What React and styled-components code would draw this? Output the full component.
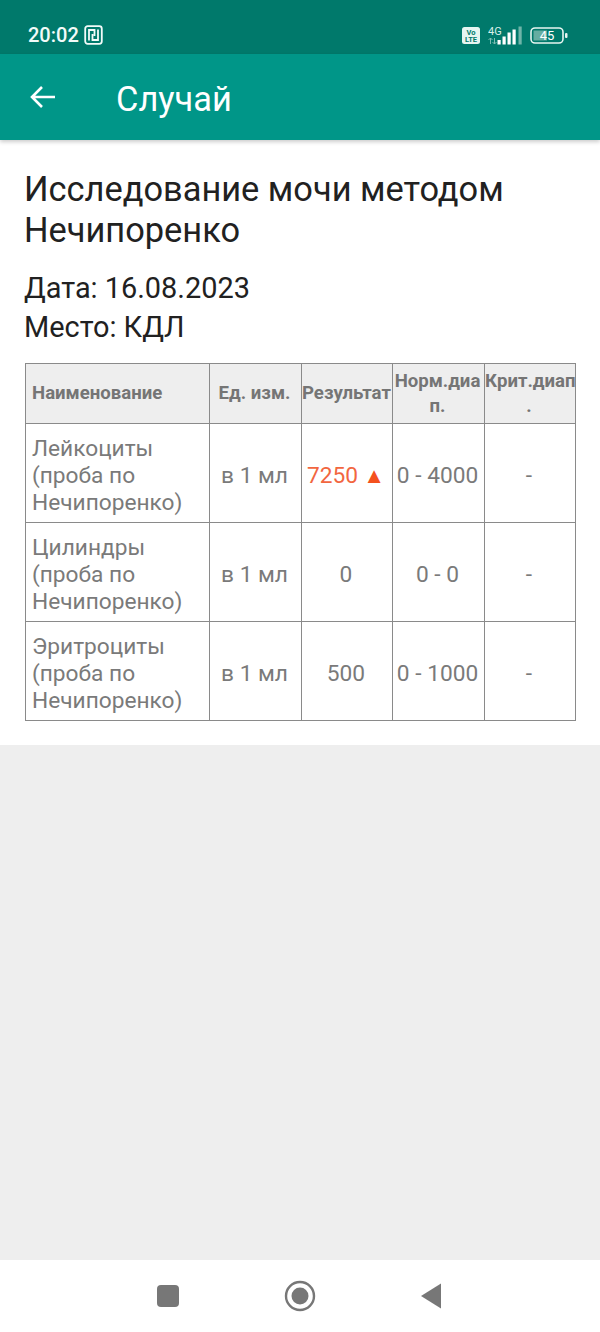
import styled, { createGlobalStyle } from "styled-components";

const GlobalStyle = createGlobalStyle`
  html, body {
    margin: 0;
    padding: 0;
    background: #eeeeee;
    font-family: Roboto, "Noto Sans", sans-serif;
  }
`;

const Screen = styled.div`
  width: 600px;
  height: 1332px;
  display: flex;
  flex-direction: column;
  overflow: hidden;
`;

const StatusBar = styled.div`
  height: 54px;
  flex: none;
  background: #00796b;
  color: #f2fbf9;
  display: flex;
  align-items: center;
  justify-content: space-between;
  padding: 16px 32px 0 28px;
  box-sizing: border-box;
`;

const StatusLeft = styled.div`
  display: flex;
  align-items: center;
  gap: 5px;
  font-size: 20px;
  font-weight: 500;
`;

const StatusRight = styled.div`
  display: flex;
  align-items: center;
  gap: 8px;
`;

const AppBar = styled.header`
  height: 86px;
  flex: none;
  background: #009688;
  color: #ffffff;
  display: flex;
  align-items: center;
  padding-left: 30px;
  box-shadow: 0 2px 4px rgba(0, 0, 0, 0.2);
  position: relative;
`;

const AppTitle = styled.h1`
  margin: 4px 0 0 61px;
  font-size: 34.4px;
  font-weight: 400;
  line-height: 1;
`;

const Content = styled.main`
  background: #ffffff;
  padding: 29px 25px 25px;
  height: 605px;
  box-sizing: border-box;
  flex: none;
`;

const Heading = styled.h2`
  margin: 0 0 0 -1px;
  font-size: 34.4px;
  line-height: 41px;
  font-weight: 400;
  color: #212121;
`;

const Meta = styled.div`
  margin: 18px 0 17px -1px;
  font-size: 28.9px;
  line-height: 38.5px;
  color: #212121;
`;

const Table = styled.table`
  width: 550px;
  table-layout: fixed;
  border-collapse: collapse;
  color: #757575;
`;

const HeadCell = styled.th`
  height: 60px;
  padding: 0 ${(props) => (props.$left ? "0" : "2px")} 0 ${(props) => (props.$left ? "6px" : "0")};
  background: #eeeeee;
  border: 1px solid #8a8a8a;
  font-size: 18.6px;
  line-height: 25px;
  font-weight: 700;
  text-align: ${(props) => (props.$left ? "left" : "center")};
  white-space: nowrap;
  box-sizing: border-box;
`;

const Cell = styled.td`
  height: 99px;
  padding: 4px ${(props) => (props.$left ? "0" : "2px")} 0 ${(props) => (props.$left ? "6px" : "0")};
  border: 1px solid #8a8a8a;
  font-size: 22.7px;
  line-height: 27px;
  text-align: ${(props) => (props.$left ? "left" : "center")};
  color: ${(props) => (props.$alert ? "#f2663f" : "#7a7a7a")};
  box-sizing: border-box;
`;

const AlertMark = styled.span`
  font-size: 22px;
  color: #f4511e;
`;

const Filler = styled.div`
  flex: 1;
  background: #eeeeee;
`;

const NavBar = styled.nav`
  height: 72px;
  flex: none;
  background: #ffffff;
  display: flex;
  align-items: center;
  justify-content: center;
  gap: 104px;
  padding-right: 3px;
  padding-bottom: 1px;
  box-sizing: border-box;
`;

const Nfc = () => (
  <svg width="19" height="20" viewBox="0 0 19 20" fill="none" stroke="#f2fbf9" strokeWidth="1.8">
    <rect x="1.2" y="1.2" width="16.6" height="17.6" rx="2.5" />
    <path d="M5 15.500V5h5.500v6M14 4.500V15H8.500V9" />
  </svg>
);

const Volte = () => (
  <svg width="18" height="17" viewBox="0 0 18 17">
    <rect width="18" height="17" rx="2.500" fill="#e6f5f1" />
    <text x="9" y="7.500" fontSize="7.500" fontWeight="700" fontFamily="Roboto" textAnchor="middle" fill="#00796b">Vo</text>
    <text x="9" y="15" fontSize="7.500" fontWeight="700" fontFamily="Roboto" textAnchor="middle" fill="#00796b">LTE</text>
  </svg>
);

const Signal = () => (
  <svg width="34" height="19" viewBox="0 0 34 19">
    <text x="0" y="8.500" fontSize="11" fontFamily="Roboto" fill="#d8efe9">4G</text>
    <path d="M2.500 12v6M0.500 14l2-2 2 2M6.500 18v-6M4.500 16l2 2 2-2" stroke="#7fbdb2" strokeWidth="1" fill="none" />
    <rect x="9.500" y="14" width="3.200" height="4.500" fill="#fff" />
    <rect x="14.500" y="10.500" width="3.200" height="8" fill="#fff" />
    <rect x="19.500" y="6.500" width="3.200" height="12" fill="#fff" />
    <rect x="24.500" y="3.500" width="3.200" height="15" fill="#fff" />
    <rect x="30.500" y="0.500" width="3.200" height="18" fill="#6fb5a9" />
  </svg>
);

const Battery = () => (
  <svg width="38" height="17" viewBox="0 0 38 17">
    <rect x="1" y="1" width="32" height="15" rx="4" fill="none" stroke="#e6f5f1" strokeWidth="1.600" />
    <path d="M3.500 3.500H17v10H3.500z" fill="#66ada1" />
    <rect x="35" y="6" width="2.500" height="5" rx="1" fill="#e6f5f1" />
    <text x="17" y="13" fontSize="13" fontFamily="Roboto" textAnchor="middle" fill="#fff">45</text>
  </svg>
);

const BackArrow = () => (
  <svg width="25" height="26" viewBox="0 0 25 26" fill="none" stroke="#ffffff" strokeWidth="2.600">
    <path d="M25 13H2M12 3 2 13l10 10" />
  </svg>
);

const SquareIcon = () => (
  <svg width="24" height="24" viewBox="0 0 24 24">
    <rect x="1" y="1" width="22" height="22" rx="4" fill="#777777" />
  </svg>
);

const CircleIcon = () => (
  <svg width="32" height="32" viewBox="0 0 32 32">
    <circle cx="16" cy="16" r="14" fill="none" stroke="#777777" strokeWidth="2.400" />
    <circle cx="16" cy="16" r="8.500" fill="#777777" />
  </svg>
);

const TriangleIcon = () => (
  <svg width="22" height="26" viewBox="0 0 22 26">
    <path d="M1 13 21 0.500V25.500Z" fill="#777777" />
  </svg>
);

const rows = [
  { name: "Лейкоциты (проба по Нечипоренко)", result: "7250", norm: "0 - 4000", alert: true },
  { name: "Цилиндры (проба по Нечипоренко)", result: "0", norm: "0 - 0" },
  { name: "Эритроциты (проба по Нечипоренко)", result: "500", norm: "0 - 1000" },
];

export default function App() {
  return (
    <Screen>
      <GlobalStyle />
      <StatusBar>
        <StatusLeft>
          20:02
          <Nfc />
        </StatusLeft>
        <StatusRight>
          <Volte />
          <Signal />
          <Battery />
        </StatusRight>
      </StatusBar>
      <AppBar>
        <BackArrow />
        <AppTitle>Случай</AppTitle>
      </AppBar>
      <Content>
        <Heading>Исследование мочи методом Нечипоренко</Heading>
        <Meta>
          Дата: 16.08.2023
          <br />
          Место: КДЛ
        </Meta>
        <Table>
          <colgroup>
            <col style={{ width: 184 }} />
            <col style={{ width: 92 }} />
            <col style={{ width: 91 }} />
            <col style={{ width: 92 }} />
            <col style={{ width: 91 }} />
          </colgroup>
          <thead>
            <tr>
              <HeadCell $left>Наименование</HeadCell>
              <HeadCell>Ед. изм.</HeadCell>
              <HeadCell>Результат</HeadCell>
              <HeadCell>
                Норм.диа
                <br />
                п.
              </HeadCell>
              <HeadCell>
                Крит.диап
                <br />.
              </HeadCell>
            </tr>
          </thead>
          <tbody>
            {rows.map((row) => (
              <tr key={row.name}>
                <Cell $left>{row.name}</Cell>
                <Cell>в 1 мл</Cell>
                <Cell $alert={row.alert}>
                  {row.result}
                  {row.alert && <AlertMark> ▲</AlertMark>}
                </Cell>
                <Cell>{row.norm}</Cell>
                <Cell>-</Cell>
              </tr>
            ))}
          </tbody>
        </Table>
      </Content>
      <Filler />
      <NavBar>
        <SquareIcon />
        <CircleIcon />
        <TriangleIcon />
      </NavBar>
    </Screen>
  );
}
